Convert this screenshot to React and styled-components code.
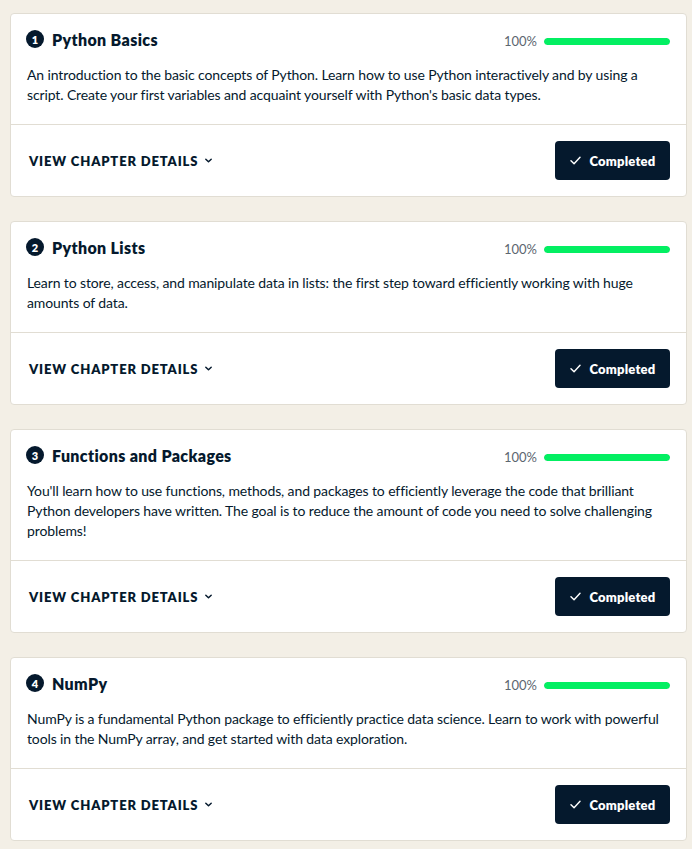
import styled, { createGlobalStyle } from 'styled-components'

const Global = createGlobalStyle`
  body {
    margin: 0;
    background: #f3efe6;
    font-family: Lato, "Noto Sans", sans-serif;
    color: #05192d;
  }
`

const Page = styled.div`
  display: flex;
  flex-direction: column;
  gap: 24px;
  padding: 13px 5px 12px 10px;
`

const Card = styled.section`
  background: #fff;
  border: 1px solid #e1ddd3;
  border-radius: 4px;
`

const Body = styled.div`
  padding: 13px 16px 19px 15px;
  border-bottom: 1px solid #e1ddd3;
`

const Header = styled.div`
  display: flex;
  align-items: center;
  justify-content: space-between;
  height: 24px;
`

const Title = styled.h3`
  display: flex;
  align-items: center;
  gap: 8px;
  margin: 0;
  font-size: 16px;
  font-weight: 800;
  letter-spacing: 0.35px;
`

const Badge = styled.span`
  display: inline-flex;
  align-items: center;
  justify-content: center;
  width: 18px;
  height: 18px;
  border-radius: 50%;
  background: #05192d;
  color: #fff;
  font-size: 11px;
  font-weight: 800;
  letter-spacing: 0;
`

const Progress = styled.div`
  display: flex;
  align-items: center;
  gap: 7px;
  margin-top: 4px;
  font-size: 13px;
  color: #5c6670;
`

const Track = styled.div`
  width: 126px;
  height: 7px;
  border-radius: 4px;
  background: #e8e8ea;
  overflow: hidden;
`

const Fill = styled.div`
  height: 100%;
  background: #03ef62;
  border-radius: 4px;
`

const Description = styled.p`
  margin: 14px 0 0 1px;
  font-size: 14px;
  line-height: 20px;
  letter-spacing: -0.12px;
`

const Footer = styled.div`
  display: flex;
  align-items: center;
  justify-content: space-between;
  padding: 16px 16px 16px 18px;
`

const Details = styled.button`
  display: flex;
  align-items: center;
  gap: 6px;
  background: none;
  border: 0;
  padding: 0;
  font-family: inherit;
  font-size: 13px;
  font-weight: 800;
  letter-spacing: 0.85px;
  text-transform: uppercase;
  color: #05192d;
`

const Done = styled.button`
  display: flex;
  align-items: center;
  justify-content: center;
  gap: 9px;
  width: 115px;
  height: 39px;
  background: #05192d;
  color: #fff;
  border: 0;
  border-radius: 4px;
  font-family: inherit;
  font-size: 13px;
  font-weight: 800;
  letter-spacing: 0.2px;
`

const Chevron = () => (
  <svg width="9" height="9" viewBox="0 0 10 10" fill="none" stroke="#05192d" strokeWidth="1.6" strokeLinecap="round" strokeLinejoin="round">
    <path d="M2 3.5l3 3 3-3" />
  </svg>
)

const Check = () => (
  <svg width="11" height="9" viewBox="0 0 12 10" fill="none" stroke="#fff" strokeWidth="1.6" strokeLinecap="round" strokeLinejoin="round">
    <path d="M1 5.2l3.4 3.3L11 1.5" />
  </svg>
)

const chapters = [
  {
    title: 'Python Basics',
    text: "An introduction to the basic concepts of Python. Learn how to use Python interactively and by using a script. Create your first variables and acquaint yourself with Python's basic data types.",
  },
  {
    title: 'Python Lists',
    text: 'Learn to store, access, and manipulate data in lists: the first step toward efficiently working with huge amounts of data.',
  },
  {
    title: 'Functions and Packages',
    text: "You'll learn how to use functions, methods, and packages to efficiently leverage the code that brilliant Python developers have written. The goal is to reduce the amount of code you need to solve challenging problems!",
  },
  {
    title: 'NumPy',
    text: 'NumPy is a fundamental Python package to efficiently practice data science. Learn to work with powerful tools in the NumPy array, and get started with data exploration.',
  },
]

export default function App() {
  return (
    <>
      <Global />
      <Page>
        {chapters.map((c, i) => (
          <Card key={c.title}>
            <Body>
              <Header>
                <Title>
                  <Badge>{i + 1}</Badge>
                  {c.title}
                </Title>
                <Progress>
                  100%
                  <Track>
                    <Fill style={{ width: '100%' }} />
                  </Track>
                </Progress>
              </Header>
              <Description>{c.text}</Description>
            </Body>
            <Footer>
              <Details>
                View chapter details <Chevron />
              </Details>
              <Done>
                <Check />
                Completed
              </Done>
            </Footer>
          </Card>
        ))}
      </Page>
    </>
  )
}
